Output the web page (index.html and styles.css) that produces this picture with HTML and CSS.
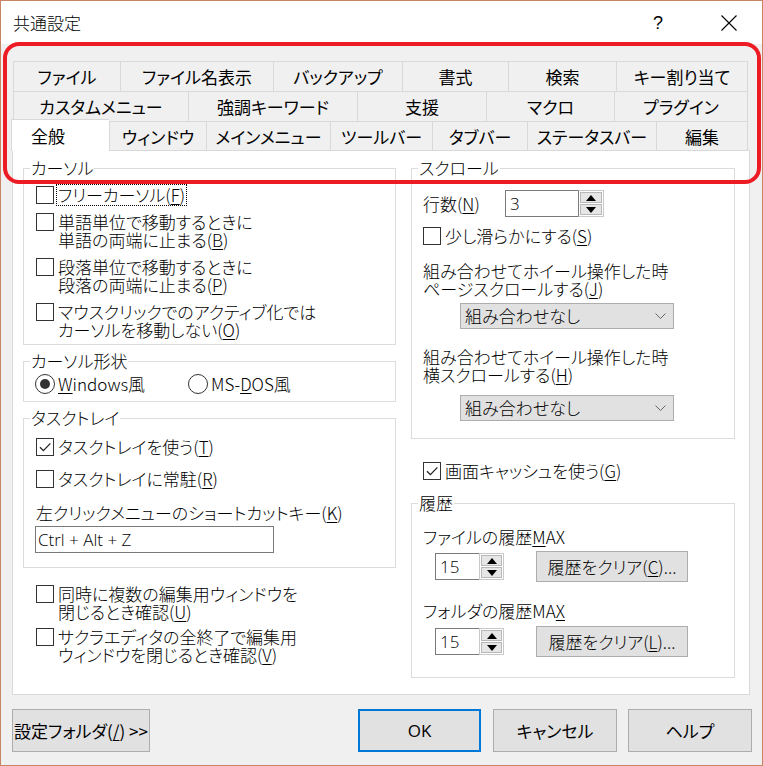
FILE: index.html
```html
<!DOCTYPE html>
<html lang="ja">
<head>
<meta charset="utf-8">
<title>共通設定</title>
<link rel="stylesheet" href="styles.css">
</head>
<body>
<div class="window">
  <div class="titlebar">
    <span class="title">共通設定</span>
    <span class="help">?</span>
    <span class="close"><svg width="16" height="16" viewBox="0 0 16 16"><path d="M0.5 0.5 L15.5 15.5 M15.5 0.5 L0.5 15.5" stroke="#000" stroke-width="1.1" fill="none"/></svg></span>
  </div>
  <div class="client">
    <div class="tabs">
      <div class="tabrow r1">
        <div class="tab">ファイル</div>
        <div class="tab">ファイル名表示</div>
        <div class="tab">バックアップ</div>
        <div class="tab">書式</div>
        <div class="tab">検索</div>
        <div class="tab">キー割り当て</div>
      </div>
      <div class="tabrow r2">
        <div class="tab">カスタムメニュー</div>
        <div class="tab">強調キーワード</div>
        <div class="tab">支援</div>
        <div class="tab">マクロ</div>
        <div class="tab">プラグイン</div>
      </div>
      <div class="tabrow r3">
        <div class="tab active">全般</div>
        <div class="tab">ウィンドウ</div>
        <div class="tab">メインメニュー</div>
        <div class="tab">ツールバー</div>
        <div class="tab">タブバー</div>
        <div class="tab">ステータスバー</div>
        <div class="tab">編集</div>
      </div>
    </div>

    <div class="panel">
      <div class="col col-left">
        <fieldset class="group g-cursor">
          <legend>カーソル</legend>
          <div class="gbody">
            <div class="check"><span class="box"></span><span class="label focus">フリーカーソル(<u>F</u>)</span></div>
            <div class="check"><span class="box"></span><span class="label">単語単位で移動するときに<br>単語の両端に止まる(<u>B</u>)</span></div>
            <div class="check"><span class="box"></span><span class="label">段落単位で移動するときに<br>段落の両端に止まる(<u>P</u>)</span></div>
            <div class="check"><span class="box"></span><span class="label">マウスクリックでのアクティブ化では<br>カーソルを移動しない(<u>O</u>)</span></div>
          </div>
        </fieldset>

        <fieldset class="group g-shape">
          <legend>カーソル形状</legend>
          <div class="gbody radios">
            <div class="radio r-win"><span class="circle on"></span><span class="label"><u>W</u>indows風</span></div>
            <div class="radio"><span class="circle"></span><span class="label">MS-<u>D</u>OS風</span></div>
          </div>
        </fieldset>

        <fieldset class="group g-tray">
          <legend>タスクトレイ</legend>
          <div class="gbody">
            <div class="check"><span class="box"><svg width="16" height="16" viewBox="0 0 16 16"><path d="M3 8.2 L6.4 11.6 L13.4 4.4" stroke="#222" stroke-width="1.3" fill="none"/></svg></span><span class="label">タスクトレイを使う(<u>T</u>)</span></div>
            <div class="check mt14"><span class="box"></span><span class="label">タスクトレイに常駐(<u>R</u>)</span></div>
            <div class="text-label mt16">左クリックメニューのショートカットキー(<u>K</u>)</div>
            <div class="textbox">Ctrl + Alt + Z</div>
          </div>
        </fieldset>

        <div class="loose">
          <div class="check"><span class="box"></span><span class="label">同時に複数の編集用ウィンドウを<br>閉じるとき確認(<u>U</u>)</span></div>
          <div class="check"><span class="box"></span><span class="label">サクラエディタの全終了で編集用<br>ウィンドウを閉じるとき確認(<u>V</u>)</span></div>
        </div>
      </div>

      <div class="col col-right">
        <fieldset class="group g-scroll">
          <legend>スクロール</legend>
          <div class="gbody">
            <div class="lines-row">
              <span class="lines-label">行数(<u>N</u>)</span>
              <div class="spin spin-lines">
                <span class="spin-text">3</span>
                <span class="spin-btns">
                  <span class="sbtn"><svg width="10" height="6" viewBox="0 0 10 6"><path d="M0 6 L5 0 L10 6 Z" fill="#000"/></svg></span>
                  <span class="sbtn"><svg width="10" height="6" viewBox="0 0 10 6"><path d="M0 0 L10 0 L5 6 Z" fill="#000"/></svg></span>
                </span>
              </div>
            </div>
            <div class="check mt10"><span class="box"></span><span class="label">少し滑らかにする(<u>S</u>)</span></div>
            <div class="text-label lbl-wheel1">組み合わせてホイール操作した時<br>ページスクロールする(<u>J</u>)</div>
            <div class="combo combo1"><span>組み合わせなし</span><svg width="11" height="6" viewBox="0 0 11 6"><path d="M0.5 0.5 L5.5 5.5 L10.5 0.5" stroke="#666" stroke-width="1" fill="none"/></svg></div>
            <div class="text-label lbl-wheel2">組み合わせてホイール操作した時<br>横スクロールする(<u>H</u>)</div>
            <div class="combo combo2"><span>組み合わせなし</span><svg width="11" height="6" viewBox="0 0 11 6"><path d="M0.5 0.5 L5.5 5.5 L10.5 0.5" stroke="#666" stroke-width="1" fill="none"/></svg></div>
          </div>
        </fieldset>

        <div class="check cache"><span class="box"><svg width="16" height="16" viewBox="0 0 16 16"><path d="M3 8.2 L6.4 11.6 L13.4 4.4" stroke="#222" stroke-width="1.3" fill="none"/></svg></span><span class="label">画面キャッシュを使う(<u>G</u>)</span></div>

        <fieldset class="group g-hist">
          <legend>履歴</legend>
          <div class="gbody">
            <div class="text-label">ファイルの履歴<u>M</u>AX</div>
            <div class="hist-row mt5">
              <div class="spin spin-hist">
                <span class="spin-text">15</span>
                <span class="spin-btns">
                  <span class="sbtn"><svg width="10" height="6" viewBox="0 0 10 6"><path d="M0 6 L5 0 L10 6 Z" fill="#000"/></svg></span>
                  <span class="sbtn"><svg width="10" height="6" viewBox="0 0 10 6"><path d="M0 0 L10 0 L5 6 Z" fill="#000"/></svg></span>
                </span>
              </div>
              <button class="btn clear">履歴をクリア(<u>C</u>)...</button>
            </div>
            <div class="text-label mt20">フォルダの履歴MA<u>X</u></div>
            <div class="hist-row mt6">
              <div class="spin spin-hist">
                <span class="spin-text">15</span>
                <span class="spin-btns">
                  <span class="sbtn"><svg width="10" height="6" viewBox="0 0 10 6"><path d="M0 6 L5 0 L10 6 Z" fill="#000"/></svg></span>
                  <span class="sbtn"><svg width="10" height="6" viewBox="0 0 10 6"><path d="M0 0 L10 0 L5 6 Z" fill="#000"/></svg></span>
                </span>
              </div>
              <button class="btn clear">履歴をクリア(<u>L</u>)...</button>
            </div>
          </div>
        </fieldset>
      </div>
    </div>

    <div class="buttons">
      <button class="btn b-folder">設定フォルダ(<u>/</u>) &gt;&gt;</button>
      <button class="btn b-ok">OK</button>
      <button class="btn b-cancel">キャンセル</button>
      <button class="btn b-help">ヘルプ</button>
    </div>
  </div>
  <div class="highlight"></div>
</div>
</body>
</html>
```

FILE: styles.css
```css
html, body {
  margin: 0;
  padding: 0;
  background: #f0f0f0;
}
body {
  font-family: "Noto Sans CJK JP", "Noto Sans", sans-serif;
  font-size: 17px;
  font-weight: 300;
  line-height: 18px;
  color: #000;
  font-feature-settings: "palt";
}
u { text-underline-offset: 2px; }

.window {
  position: relative;
  width: 763px;
  height: 766px;
  box-sizing: border-box;
  border: 1px solid #c98466;
  background: #f0f0f0;
  overflow: hidden;
}

/* title bar */
.titlebar {
  height: 43px;
  background: #fff;
  display: flex;
  align-items: center;
  padding-left: 12px;
}
.title { font-size: 17px; }
.help {
  margin-left: auto;
  margin-right: 58px;
  font-family: "Liberation Sans", sans-serif;
  font-size: 18px;
}
.close {
  display: flex;
  margin-right: 25px;
}

/* client area */
.client {
  padding: 17px 0 0 12px;
}

/* tabs */
.tabs { width: 735px; }
.tabrow { display: flex; height: 30px; }
.tabrow.r3 { height: 29px; }
.tab {
  box-sizing: border-box;
  border-top: 1px solid #d9d9d9;
  border-left: 1px solid #d9d9d9;
  display: flex;
  align-items: center;
  justify-content: center;
  white-space: nowrap;
  background: #f0f0f0;
  padding-top: 1px;
  font-weight: 400;
}
.tab:last-child { border-right: 1px solid #d9d9d9; }

.r1 .tab:nth-child(1) { width: 107px; }
.r1 .tab:nth-child(2) { width: 153px; }
.r1 .tab:nth-child(3) { width: 129px; }
.r1 .tab:nth-child(4) { width: 106px; }
.r1 .tab:nth-child(5) { width: 108px; }
.r1 .tab:nth-child(6) { width: 132px; }

.r2 .tab:nth-child(1) { width: 175px; }
.r2 .tab:nth-child(2) { width: 169px; }
.r2 .tab:nth-child(3) { width: 129px; }
.r2 .tab:nth-child(4) { width: 128px; }
.r2 .tab:nth-child(5) { width: 134px; }

.r3 .tab:nth-child(2) { width: 97px; }
.r3 .tab:nth-child(3) { width: 124px; }
.r3 .tab:nth-child(4) { width: 102px; }
.r3 .tab:nth-child(5) { width: 95px; }
.r3 .tab:nth-child(6) { width: 129px; }
.r3 .tab:nth-child(7) { width: 92px; }

.tab.active {
  position: relative;
  z-index: 1;
  width: 98px;
  height: 32px;
  align-self: flex-end;
  margin-left: -2px;
  margin-bottom: -1px;
  background: #fff;
  justify-content: flex-start;
  padding-left: 19px;
  padding-top: 0;
}

/* panel */
.panel {
  margin-left: -1px;
  width: 738px;
  height: 545px;
  box-sizing: border-box;
  border: 1px solid #d9d9d9;
  background: #fff;
  display: flex;
  gap: 15px;
  padding: 8px 14px 0 10px;
}
.col { display: flex; flex-direction: column; }
.col-left { width: 373px; }
.col-right { width: 324px; }

/* group boxes */
.group {
  margin: 0;
  padding: 0;
  min-width: 0;
  border: 1px solid #dcdcdc;
}
.group legend {
  padding: 0 1px;
  margin-left: 6px;
  height: 18px;
  line-height: 18px;
  white-space: nowrap;
}
.gbody { display: flex; flex-direction: column; }

.g-cursor .gbody { padding: 9px 0 5px 12px; gap: 9px; }
.g-shape { margin-top: 7px; }
.g-shape .gbody { padding: 4px 0 7px 11px; flex-direction: row; }
.g-tray { margin-top: 7px; }
.g-tray .gbody { padding: 11px 0 14px 12px; }

.loose {
  display: flex;
  flex-direction: column;
  gap: 7px;
  margin-top: 17px;
  padding-left: 13px;
}

.mt5 { margin-top: 5px; }
.mt6 { margin-top: 6px; }
.mt10 { margin-top: 10px; }
.mt14 { margin-top: 14px; }
.mt16 { margin-top: 16px; }
.mt20 { margin-top: 20px; }

/* checkboxes */
.check {
  display: flex;
  align-items: flex-start;
  gap: 4px;
  white-space: nowrap;
}
.box {
  flex: none;
  width: 18px;
  height: 18px;
  box-sizing: border-box;
  border: 1px solid #333;
  background: #fff;
  display: flex;
  align-items: center;
  justify-content: center;
}
.label { white-space: nowrap; }
.focus { outline: 1px dotted #000; outline-offset: 1px; }

/* radios */
.radio {
  display: flex;
  align-items: center;
  gap: 3px;
  height: 20px;
  white-space: nowrap;
}
.r-win { width: 153px; }
.circle {
  flex: none;
  width: 20px;
  height: 20px;
  box-sizing: border-box;
  border: 1px solid #333;
  border-radius: 50%;
  background: #fff;
  display: flex;
  align-items: center;
  justify-content: center;
}
.circle.on::after {
  content: "";
  width: 10px;
  height: 10px;
  border-radius: 50%;
  background: #333;
}

/* text box */
.text-label { white-space: nowrap; }
.textbox {
  margin-top: 4px;
  margin-left: -1px;
  width: 239px;
  height: 27px;
  box-sizing: border-box;
  border: 1px solid #7a7a7a;
  background: #fff;
  padding-left: 2px;
  display: flex;
  align-items: center;
  font-family: "Open Sans", "Noto Sans", sans-serif;
  font-size: 17px;
}

/* scroll group */
.g-scroll .gbody { padding: 13px 0 17px 11px; }
.lines-row { display: flex; align-items: center; height: 27px; }
.lines-label { width: 82px; }
.lbl-wheel1 { margin-top: 17px; }
.lbl-wheel2 { margin-top: 19px; }

.spin { display: flex; height: 27px; }
.spin-text {
  box-sizing: border-box;
  border: 1px solid #7a7a7a;
  border-right: none;
  background: #fff;
  padding-left: 4px;
  display: flex;
  align-items: center;
  font-family: "Open Sans", "Noto Sans", sans-serif;
  font-size: 17px;
}
.spin-lines .spin-text { width: 73px; }
.spin-lines .spin-btns { width: 26px; }
.spin-hist .spin-text { width: 44px; }
.spin-hist .spin-btns { width: 25px; }
.spin-btns {
  box-sizing: border-box;
  border: 1px solid #c8c8c8;
  border-left: 1px solid #7a7a7a;
  background: #fff;
  display: flex;
  flex-direction: column;
  gap: 1px;
  padding: 1px;
}
.spin-hist .spin-btns { border-left-color: #c8c8c8; }
.sbtn {
  flex: 1;
  box-sizing: border-box;
  border: 1px solid #b8b8b8;
  background: #e6e6e6;
  display: flex;
  align-items: center;
  justify-content: center;
}

.combo {
  margin-left: 37px;
  width: 214px;
  height: 26px;
  box-sizing: border-box;
  border: 1px solid #adadad;
  background: #e1e1e1;
  display: flex;
  align-items: center;
  justify-content: space-between;
  padding: 0 7px 0 4px;
}
.combo1 { margin-top: 5px; }
.combo2 { margin-top: 11px; }

.cache { margin-top: 23px; padding-left: 12px; }

/* history group */
.g-hist { margin-top: 14px; }
.g-hist .gbody { padding: 16px 0 20px 11px; }
.hist-row { display: flex; align-items: center; height: 31px; padding-left: 12px; }
.hist-row .spin { width: 69px; }

/* buttons */
.btn {
  font-family: inherit;
  font-size: 17px;
  font-weight: 300;
  line-height: 18px;
  color: #000;
  background: #e1e1e1;
  border: 1px solid #adadad;
  border-radius: 0;
  padding: 0;
  margin: 0;
  box-sizing: border-box;
  white-space: nowrap;
  font-feature-settings: "palt";
}
.clear {
  margin-left: 32px;
  width: 152px;
  height: 31px;
}

.buttons {
  display: flex;
  margin-top: 14px;
  margin-left: -1px;
  width: 740px;
  gap: 12px;
}
.buttons .btn { height: 43px; font-weight: 400; }
.b-folder { width: 138px; }
.buttons .b-ok {
  margin-left: auto;
  width: 123px;
  border: 2px solid #0078d7;
  font-family: "Open Sans", "Noto Sans", sans-serif;
  font-weight: 400;
  color: #000;
}
.b-cancel { width: 124px; }
.b-help { width: 124px; margin-left: -1px; }

/* red annotation frame */
.highlight {
  position: absolute;
  left: 2px;
  top: 41px;
  width: 758px;
  height: 142px;
  box-sizing: border-box;
  border: 4px solid #ed1c24;
  border-radius: 16px;
  pointer-events: none;
}
```
